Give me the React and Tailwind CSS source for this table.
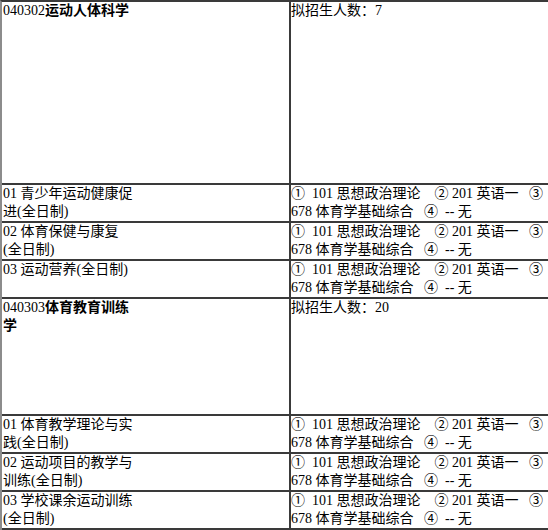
const subjects = [
  {
    code: '040302',
    name: '运动人体科学',
    quota: '7',
    headHeight: 'h-[181px]',
    directions: [
      ['01 青少年运动健康促', '进(全日制)'],
      ['02 体育保健与康复', '(全日制)'],
      ['03 运动营养(全日制)', ''],
    ],
  },
  {
    code: '040303',
    name: '体育教育训练',
    tail: '学',
    quota: '20',
    headHeight: 'h-[115px]',
    directions: [
      ['01 体育教学理论与实', '践(全日制)'],
      ['02 运动项目的教学与', '训练(全日制)'],
      ['03 学校课余运动训练', '(全日制)'],
    ],
  },
  {
    code: '040304',
    name: '民族传统体育学',
    quota: '6',
    headHeight: 'h-[115px]',
    directions: [],
  },
];

const Exams = () => (
  <div className="whitespace-nowrap">
    <div>
      ①&nbsp;&nbsp;101 思想政治理论&nbsp;&nbsp;&nbsp; ②&nbsp;201 英语一&nbsp;&nbsp; ③
    </div>
    <div>678 体育学基础综合&nbsp;&nbsp; ④&nbsp;&nbsp;-- 无</div>
  </div>
);

const Row = ({ left, right, height }) => (
  <div className="flex border-b-2 border-[#3a3a3a]">
    <div className={`w-[289px] shrink-0 border-r-2 border-[#3a3a3a] pl-px ${height}`}>{left}</div>
    <div className="flex-1">{right}</div>
  </div>
);

export default function App() {
  return (
    <div className="w-[548px] h-[530px] overflow-hidden bg-white text-black text-[14px] leading-[18px] font-['Liberation_Serif','Noto_Sans_CJK_SC',serif]">
      <div className="w-[660px] border-t-2 border-l-2 border-t-[#3a3a3a] border-l-[#8c8c8c]">
        {subjects.map((s) => (
          <div key={s.code}>
            <Row
              height={s.headHeight}
              left={
                <div className="whitespace-nowrap">
                  <div>
                    {s.code}
                    <span className="font-bold">{s.name}</span>
                  </div>
                  {s.tail && <div className="font-bold">{s.tail}</div>}
                </div>
              }
              right={<div>拟招生人数：{s.quota}</div>}
            />
            {s.directions.map((d) => (
              <Row
                key={d[0]}
                height="h-[36px]"
                left={
                  <div className="whitespace-nowrap">
                    <div>{d[0]}</div>
                    {d[1] && <div>{d[1]}</div>}
                  </div>
                }
                right={<Exams />}
              />
            ))}
          </div>
        ))}
      </div>
    </div>
  );
}
